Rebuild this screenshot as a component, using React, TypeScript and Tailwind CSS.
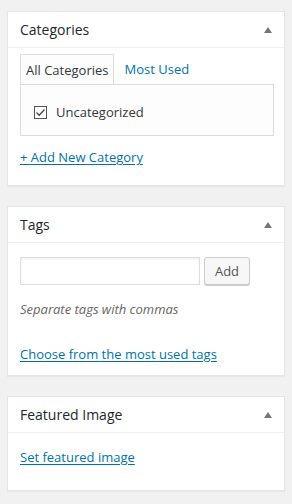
const font = { fontFamily: '"Open Sans", "Noto Sans", sans-serif' }

const Toggle = () => (
    <svg width="8" height="6" viewBox="0 0 8 6" className="block">
        <path d="M4 0 L8 6 L0 6 Z" fill="#72777c" />
    </svg>
)

const Postbox = ({ title, children }: { title: string; children: React.ReactNode }) => (
    <div className="border border-[#e5e5e5] bg-white shadow-[0_1px_1px_rgba(0,0,0,0.04)]">
        <div className="flex h-[36px] items-center justify-between border-b border-[#eee] pl-[12px] pr-[12px]">
            <h2 className="mt-px text-[14px] font-normal leading-none text-[#23282d]">{title}</h2>
            <Toggle />
        </div>
        {children}
    </div>
)

const App = () => {
    return (
        <div className="min-h-[504px] w-[292px] bg-[#f1f1f1] px-[7px] pt-[11px]" style={font}>
            <Postbox title="Categories">
                <div className="h-[137px] px-[12px] pt-[6px]">
                    <div className="relative z-10 flex text-[13px] leading-none">
                        <div className="-mb-px flex h-[30px] items-center border border-b-0 border-[#ddd] bg-[#fdfdfd] px-[5px] pt-px text-[#32373c]">
                            All Categories
                        </div>
                        <div className="ml-[4px] flex h-[30px] items-center border border-transparent px-[5px] pt-px text-[#0073aa]">
                            Most Used
                        </div>
                    </div>
                    <div className="flex h-[52px] w-[254px] items-start border border-[#ddd] bg-[#fdfdfd] pl-[13px] pt-[21px]">
                        <span className="flex h-[13px] w-[13px] items-center justify-center border border-[#555] bg-white">
                            <svg width="11" height="11" viewBox="0 0 11 11">
                                <path d="M1.5 5.5 L4.2 8.2 L9.5 2.5" fill="none" stroke="#444" strokeWidth="1.3" />
                            </svg>
                        </span>
                        <span className="-mt-[3px] ml-[9px] text-[13px] leading-[18px] text-[#32373c]">Uncategorized</span>
                    </div>
                    <a href="#" className="mt-[12px] block text-[13px] leading-[18px] text-[#0073aa] underline underline-offset-2">
                        + Add New Category
                    </a>
                </div>
            </Postbox>

            <div className="h-[20px]" />

            <Postbox title="Tags">
                <div className="h-[132px] px-[12px] pt-[14px]">
                    <div className="flex items-center">
                        <input
                            type="text"
                            className="h-[28px] w-[180px] border border-[#ddd] bg-white px-2 text-[13px] shadow-[inset_0_1px_2px_rgba(0,0,0,0.07)] outline-none"
                        />
                        <button className="ml-[4px] h-[28px] w-[46px] rounded-[3px] border border-[#ccc] bg-[#f7f7f7] text-[13px] leading-none text-[#555] shadow-[0_1px_0_#ccc]">
                            Add
                        </button>
                    </div>
                    <p className="mt-[15px] text-[13px] italic leading-[18px] text-[#666]">Separate tags with commas</p>
                    <a href="#" className="mt-[27px] block text-[13px] leading-[18px] text-[#0073aa] underline underline-offset-2">
                        Choose from the most used tags
                    </a>
                </div>
            </Postbox>

            <div className="h-[20px]" />

            <Postbox title="Featured Image">
                <div className="h-[57px] px-[12px] pt-[15px]">
                    <a href="#" className="block text-[13px] leading-[18px] text-[#0073aa] underline underline-offset-2">
                        Set featured image
                    </a>
                </div>
            </Postbox>
        </div>
    )
}

export default App
